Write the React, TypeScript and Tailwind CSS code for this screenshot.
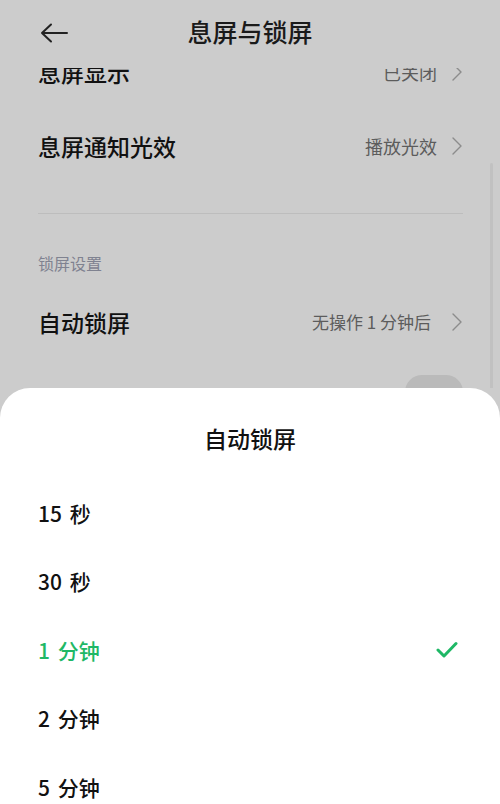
import React from 'react';

const font = { fontFamily: '"Noto Sans CJK SC", "Noto Sans", sans-serif' };

const Chevron = () => (
  <svg width="12" height="20" viewBox="0 0 12 20" fill="none" className="ml-[14px]">
    <path d="M2 2l8 8-8 8" stroke="#8c8c8c" strokeWidth="1.4" strokeLinecap="round" strokeLinejoin="round" />
  </svg>
);

const Row = ({
  label,
  value,
  className = '',
  valueClass = 'text-[18px]',
}: {
  label: string;
  value: string;
  className?: string;
  valueClass?: string;
}) => (
  <div className={`flex items-center justify-between h-[74px] ${className}`}>
    <span className="text-[23px] font-medium text-[#111]">{label}</span>
    <div className="flex items-center">
      <span className={`text-[#5c5c5c] ${valueClass}`}>{value}</span>
      <Chevron />
    </div>
  </div>
);

const options = ['15 秒', '30 秒', '1 分钟', '2 分钟', '5 分钟'];

export default function App() {
  return (
    <div className="relative h-[804px] w-[500px] overflow-hidden bg-[#cccccc]" style={font}>
      {/* header */}
      <div className="relative z-10 grid h-[68px] grid-cols-[1fr_auto_1fr] items-center bg-[#cccccc] px-[40px]">
        <svg width="28" height="20" viewBox="0 0 28 20" fill="none" className="-mt-[2px]">
          <path d="M2 10h25M11 1.5L2 10l9 8.5" stroke="#222" strokeWidth="2" strokeLinecap="round" strokeLinejoin="round" />
        </svg>
        <h1 className="pb-[5px] text-[25px] font-medium text-[#1a1a1a]">息屏与锁屏</h1>
        <div />
      </div>

      {/* list */}
      <div className="relative h-[320px] overflow-hidden px-[38px] pr-[37px]">
        <Row label="息屏显示" value="已关闭" className="-mt-[33px]" />
        <Row label="息屏通知光效" value="播放光效" />
        <div className="mt-[30px] h-px bg-[#bdbdbd]" />
        <div className="pt-[37px] text-[16px] leading-[24px] text-[#7f8290]">锁屏设置</div>
        <Row label="自动锁屏" value="无操作 1 分钟后" valueClass="text-[17px] pr-[6px]" className="mt-[10px]" />
        <div className="flex justify-end pt-[16px]">
          <div className="h-[34px] w-[58px] rounded-full bg-[#bababa]" />
        </div>
        <div className="absolute right-[7px] top-[95px] h-[240px] w-[3px] rounded-full bg-[#c1c1c1]" />
      </div>

      {/* bottom sheet */}
      <div className="absolute inset-x-0 bottom-0 top-[388px] rounded-t-[30px] bg-white">
        <h2 className="pt-[35px] text-center text-[23px] font-medium leading-[30px] text-[#111]">自动锁屏</h2>
        <div className="mt-[26px] px-[38px] pr-[42px]">
          {options.map((o) => {
            const active = o === '1 分钟';
            return (
              <div key={o} className="flex h-[68.5px] items-center justify-between">
                <span className={`text-[21px] font-medium [word-spacing:3px] ${active ? 'text-[#1fb866]' : 'text-[#111]'}`}>{o}</span>
                {active && (
                  <svg width="22" height="18" viewBox="0 0 22 18" fill="none">
                    <path d="M2 9l6 6L20 2.5" stroke="#1fb866" strokeWidth="3" strokeLinecap="round" strokeLinejoin="round" />
                  </svg>
                )}
              </div>
            );
          })}
        </div>
      </div>
    </div>
  );
}
